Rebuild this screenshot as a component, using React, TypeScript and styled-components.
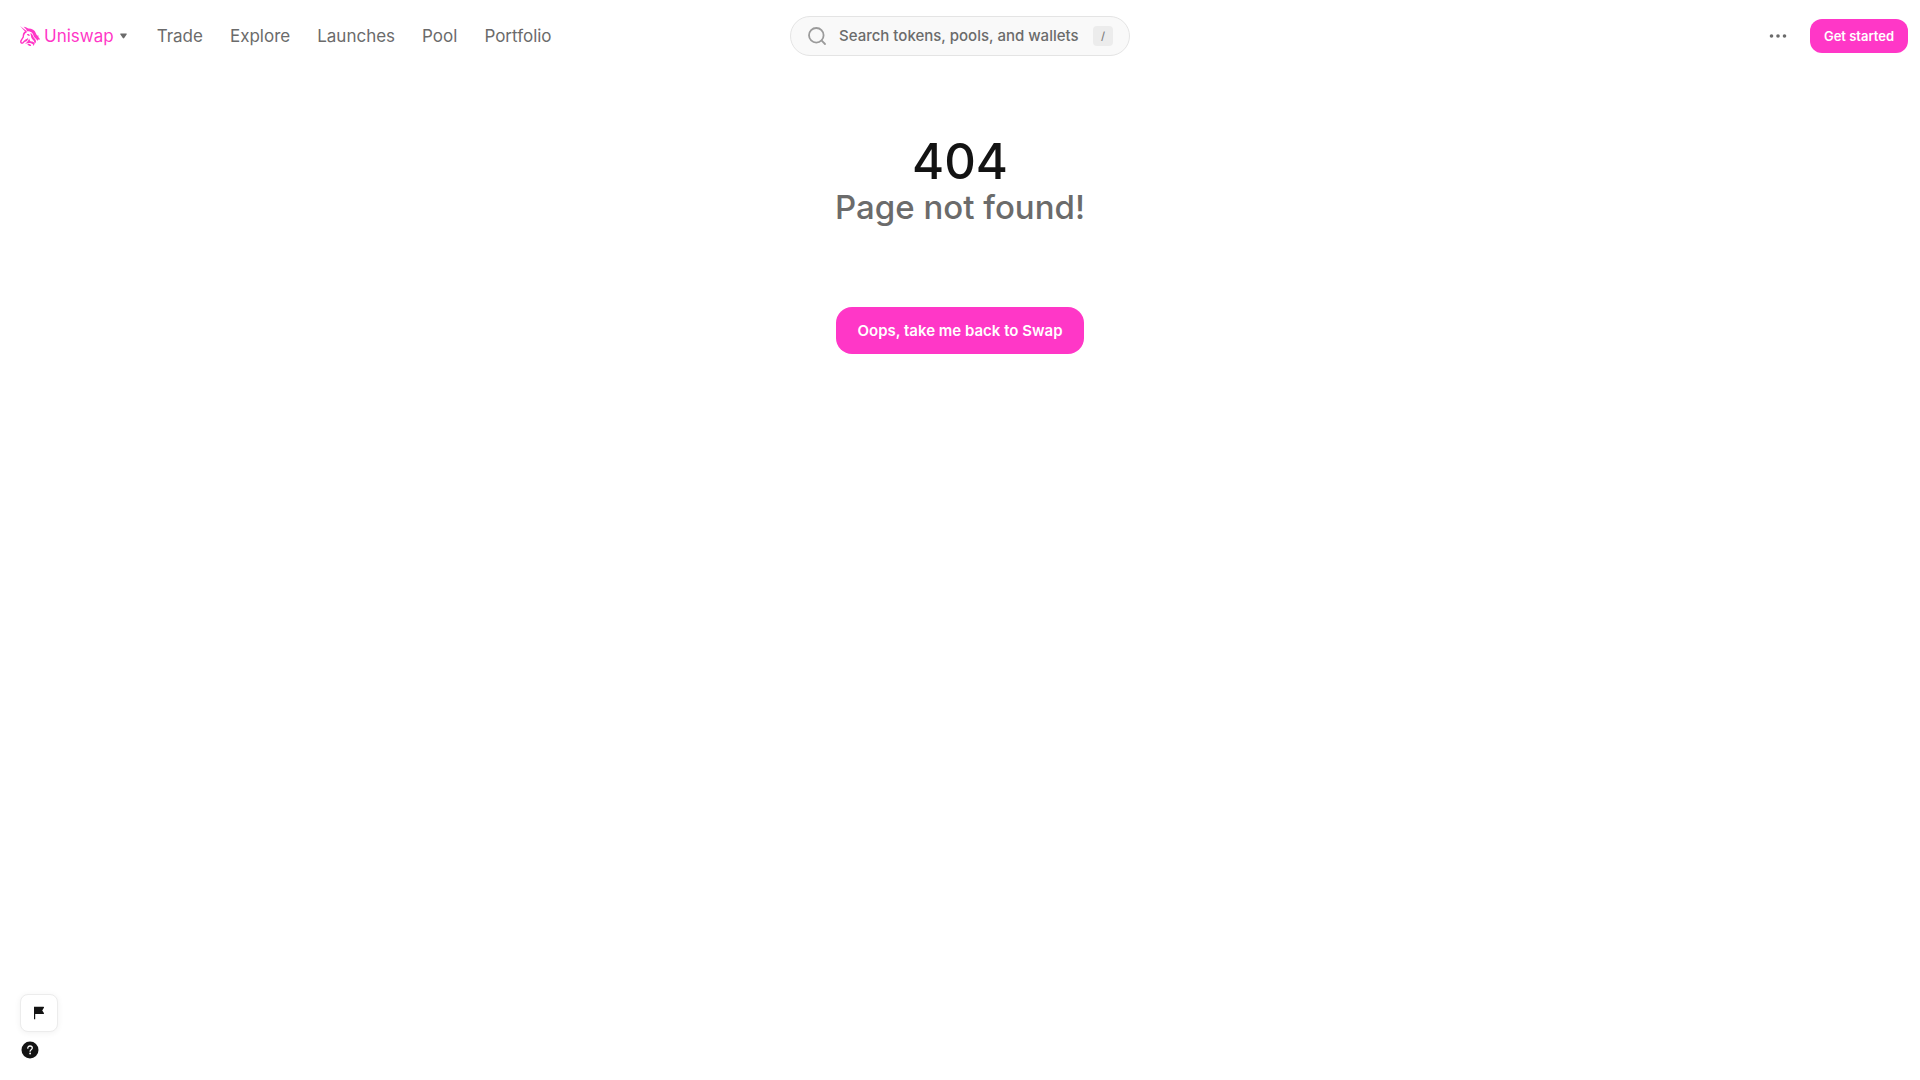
import React from 'react';
import styled, { createGlobalStyle } from 'styled-components';

const pink = '#ff37c7';
const ink = '#131313';
const muted = '#6b6b6b';

const GlobalStyle = createGlobalStyle`
  *, *::before, *::after { box-sizing: border-box; }
  body {
    margin: 0;
    background: #fff;
    color: ${ink};
    font-family: Inter, 'Liberation Sans', sans-serif;
  }
  a { text-decoration: none; color: inherit; }
  button { font: inherit; border: 0; cursor: pointer; }
`;

const Page = styled.div`
  min-height: 100vh;
  display: flex;
  flex-direction: column;
`;

const Header = styled.header`
  height: 72px;
  padding: 0 12px;
  display: grid;
  grid-template-columns: 1fr 340px 1fr;
  align-items: center;
`;

const Nav = styled.nav`
  padding-left: 8px;
  display: flex;
  align-items: center;
  gap: 27px;
  font-size: 17px;
  line-height: 24px;
`;

const Brand = styled.button`
  display: flex;
  align-items: center;
  gap: 4px;
  padding: 0;
  margin-right: 3px;
  background: none;
  color: ${pink};
`;

const Caret = styled.svg`
  margin-left: 2px;
`;

const NavLink = styled.a`
  color: ${muted};
`;

const Search = styled.label`
  height: 40px;
  padding: 0 16px;
  display: flex;
  align-items: center;
  gap: 12px;
  border: 1px solid #e4e4e4;
  border-radius: 20px;
  background: #f9f9f9;
`;

const SearchInput = styled.input`
  flex: 1;
  min-width: 0;
  padding: 0;
  border: 0;
  outline: 0;
  background: none;
  color: ${ink};
  font: 500 15px/20px Inter, 'Liberation Sans', sans-serif;
  &::placeholder { color: ${muted}; opacity: 1; }
`;

const Key = styled.kbd`
  width: 20px;
  height: 20px;
  display: grid;
  place-items: center;
  border-radius: 4px;
  background: #ececec;
  color: #7d7d7d;
  font: 500 11px/16px Inter, 'Liberation Sans', sans-serif;
`;

const Actions = styled.div`
  display: flex;
  justify-content: flex-end;
  align-items: center;
  gap: 20px;
`;

const MoreButton = styled.button`
  display: flex;
  padding: 0;
  background: none;
`;

const PinkButton = styled.button<{ $large?: boolean }>`
  height: ${p => (p.$large ? 47 : 34)}px;
  width: ${p => (p.$large ? 248 : 98)}px;
  padding: 0;
  border-radius: ${p => (p.$large ? 16 : 12)}px;
  background: ${pink};
  color: #fff;
  font-size: ${p => (p.$large ? 15 : 13)}px;
  font-weight: 600;
  white-space: nowrap;
`;

const Main = styled.main`
  flex: 1;
  padding-top: 61px;
  display: flex;
  flex-direction: column;
  align-items: center;
`;

const Code = styled.h1`
  margin: 0;
  font-size: 49px;
  line-height: 58px;
  font-weight: 500;
`;

const Message = styled.p`
  margin: 0 0 83px;
  color: ${muted};
  font-size: 33px;
  line-height: 33px;
  font-weight: 500;
`;

const Support = styled.aside`
  padding: 0 20px 20px;
  display: flex;
  flex-direction: column;
  align-items: flex-start;
  gap: 8px;
`;

const FlagButton = styled.button`
  width: 38px;
  height: 38px;
  display: grid;
  place-items: center;
  padding: 0;
  border: 1px solid #ececec;
  border-radius: 8px;
  background: #fff;
  box-shadow: 0 1px 6px rgba(0, 0, 0, 0.06);
`;

const HelpLink = styled.a`
  display: flex;
`;

const links = ['Trade', 'Explore', 'Launches', 'Pool', 'Portfolio'];

const Unicorn = () => (
  <svg width="20" height="20" viewBox="29 46 61 61" fill={pink} aria-hidden="true">
    <path d="M29 46 L49 61 L46 64 Z" />
    <path d="M40 48 C46 49 52 51 55 56 L50 59 C47 55 44 52 40 48 Z" />
    <path d="M48 60 C39 64 37 71 37 79 L30 90 C27 97 32 102 38 100 L44 94 C50 94 54 89 54 82 C50 87 44 87 41 91 L36 96 C33 96 33 93 35 90 L41 80 C41 73 44 68 50 65 Z" />
    <path d="M50 54 C63 52 74 58 77 67 C79 73 82 76 87 76 C86 78 85 79 83 79 C87 81 89 84 90 88 C86 86 83 87 82 92 C80 87 78 85 74 82 C69 77 70 70 65 66 C61 63 57 62 50 62 Z" />
    <path d="M63 68 C69 72 68 79 74 85 C80 91 78 98 73 101 C74 94 70 90 66 86 C61 80 64 74 60 69 Z" />
    <path d="M50 71 C55 69 58 71 59 76 C55 77 52 75 50 71 Z" />
    <path d="M57 84 C54 92 49 97 44 101 C52 97 58 97 64 99 C69 101 70 103 69 107 C77 100 72 93 64 93 C59 93 59 89 57 84 Z" />
    <path d="M51 101 C57 99 62 101 63 107 C58 108 54 106 51 101 Z" />
  </svg>
);

export default function App() {
  return (
    <Page>
      <GlobalStyle />
      <Header>
        <Nav aria-label="Main">
          <Brand type="button">
            <Unicorn />
            Uniswap
            <Caret width="7" height="6" viewBox="0 0 7 6" aria-hidden="true">
              <path d="M1 .5h5c.7 0 1 .6.6 1.1L4.2 5c-.4.6-1 .6-1.4 0L.4 1.600C0 1.100.3.5 1 .5Z" fill={muted} />
            </Caret>
          </Brand>
          {links.map(l => (
            <NavLink key={l} href="#">{l}</NavLink>
          ))}
        </Nav>
        <Search>
          <svg width="20" height="20" viewBox="0 0 20 20" fill="none" stroke="#9b9b9b" strokeWidth="1.800" strokeLinecap="round" aria-hidden="true">
            <circle cx="9.300" cy="9.300" r="7.300" />
            <path d="M14.700 14.700l3.300 3.300" />
          </svg>
          <SearchInput aria-label="Search" placeholder="Search tokens, pools, and wallets" />
          <Key>/</Key>
        </Search>
        <Actions>
          <MoreButton type="button" aria-label="More">
            <svg width="24" height="24" viewBox="0 0 24 24" fill={muted}>
              <circle cx="5.500" cy="12" r="1.800" />
              <circle cx="12" cy="12" r="1.800" />
              <circle cx="18.500" cy="12" r="1.800" />
            </svg>
          </MoreButton>
          <PinkButton type="button">Get started</PinkButton>
        </Actions>
      </Header>
      <Main>
        <Code>404</Code>
        <Message>Page not found!</Message>
        <PinkButton type="button" $large>Oops, take me back to Swap</PinkButton>
      </Main>
      <Support>
        <FlagButton type="button" aria-label="Report">
          <svg width="12" height="14" viewBox="0 0 12 14" fill={ink}>
            <path d="M1 .8h9.500c.5 0 .7.500.4.900L9.200 4.500l1.700 2.500c.3.4.1.9-.4.900H2.200V13.300H1Z" />
          </svg>
        </FlagButton>
        <HelpLink href="#" aria-label="Help">
          <svg width="20" height="20" viewBox="0 0 20 20">
            <circle cx="10" cy="10" r="8.500" fill={ink} />
            <path d="M7.800 8.200c0-3 4.500-2.800 4.500-.1 0 1.600-2.200 1.600-2.200 3.100" fill="none" stroke="#fff" strokeWidth="1.300" strokeLinecap="round" />
            <circle cx="10.100" cy="13.500" r=".9" fill="#fff" />
          </svg>
        </HelpLink>
      </Support>
    </Page>
  );
}
